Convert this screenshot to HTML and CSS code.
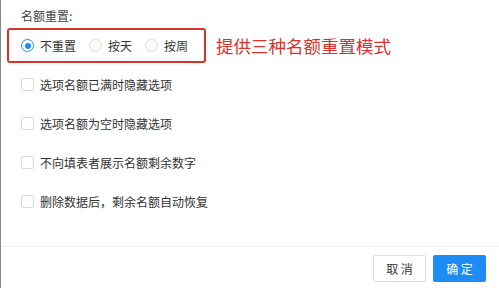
FILE: index.html
```html
<!DOCTYPE html>
<html lang="zh">
<head>
<meta charset="utf-8">
<link rel="stylesheet" href="styles.css">
</head>
<body>
<div class="dialog">
  <div class="content">
    <div class="field-label">名额重置:</div>
    <div class="radio-line">
      <div class="radio-box">
        <label class="radio-item"><span class="radio checked"></span><span class="radio-text">不重置</span></label>
        <label class="radio-item"><span class="radio"></span><span class="radio-text">按天</span></label>
        <label class="radio-item"><span class="radio"></span><span class="radio-text">按周</span></label>
      </div>
      <div class="note">提供三种名额重置模式</div>
    </div>
    <div class="checks">
      <label class="check-row"><span class="checkbox"></span><span class="check-text">选项名额已满时隐藏选项</span></label>
      <label class="check-row"><span class="checkbox"></span><span class="check-text">选项名额为空时隐藏选项</span></label>
      <label class="check-row"><span class="checkbox"></span><span class="check-text">不向填表者展示名额剩余数字</span></label>
      <label class="check-row"><span class="checkbox"></span><span class="check-text">删除数据后，剩余名额自动恢复</span></label>
    </div>
  </div>
  <div class="footer">
    <button class="btn btn-default">取 消</button>
    <button class="btn btn-primary">确 定</button>
  </div>
</div>
</body>
</html>
```

FILE: styles.css
```css
* { box-sizing: border-box; }
html, body { margin: 0; padding: 0; background: #fff; }
body {
  font-family: "Noto Sans CJK SC", "Noto Sans", sans-serif;
  font-size: 12px;
  color: #333;
}
.dialog {
  width: 499px;
  height: 288px;
  border-left: 1px solid #8a8a8a;
  display: flex;
  flex-direction: column;
}
.content {
  flex: 1;
  padding-top: 8px;
}
.field-label {
  margin-left: 20px;
  line-height: 16px;
  height: 16px;
  color: #444;
}
.radio-line {
  display: flex;
  align-items: center;
  margin-top: 4px;
}
.radio-box {
  margin-left: 6px;
  width: 199px;
  height: 35px;
  border: 2px solid #d8322b;
  border-radius: 3px;
  padding-left: 12px;
  display: flex;
  align-items: center;
}
.radio-item {
  display: flex;
  align-items: center;
  margin-right: 13px;
}
.radio {
  width: 13px;
  height: 13px;
  border: 1px solid #d9d9d9;
  border-radius: 50%;
  margin-right: 6px;
  position: relative;
  background: #fff;
}
.radio.checked { border-color: #1e8cf5; }
.radio.checked::after {
  content: "";
  position: absolute;
  left: 2.5px;
  top: 2.5px;
  width: 6px;
  height: 6px;
  border-radius: 50%;
  background: #1e8cf5;
}
.radio-text { line-height: 16px; color: #333; }
.note {
  margin-left: 10px;
  font-size: 17.5px;
  color: #d8322b;
  line-height: 24px;
}
.checks {
  margin-top: 2px;
  display: grid;
  grid-auto-rows: 39px;
}
.check-row {
  display: flex;
  align-items: center;
  padding-left: 20px;
}
.checkbox {
  width: 13px;
  height: 13px;
  border: 1px solid #d9d9d9;
  border-radius: 2px;
  margin-right: 6px;
  background: #fff;
}
.check-text { line-height: 16px; color: #333; }
.footer {
  height: 42px;
  border-top: 1px solid #eeeeee;
  display: flex;
  justify-content: flex-end;
  align-items: flex-start;
  padding-top: 8px;
  padding-right: 13px;
  gap: 7px;
}
.btn {
  width: 53px;
  height: 27px;
  border-radius: 2px;
  font-family: "Noto Sans CJK SC", "Noto Sans", sans-serif;
  font-size: 12px;
  padding: 0;
  cursor: pointer;
}
.btn-default {
  background: #fff;
  border: 1px solid #dcdcdc;
  color: #333;
}
.btn-primary {
  background: #1e8cf5;
  border: 1px solid #1e8cf5;
  color: #fff;
}
```
